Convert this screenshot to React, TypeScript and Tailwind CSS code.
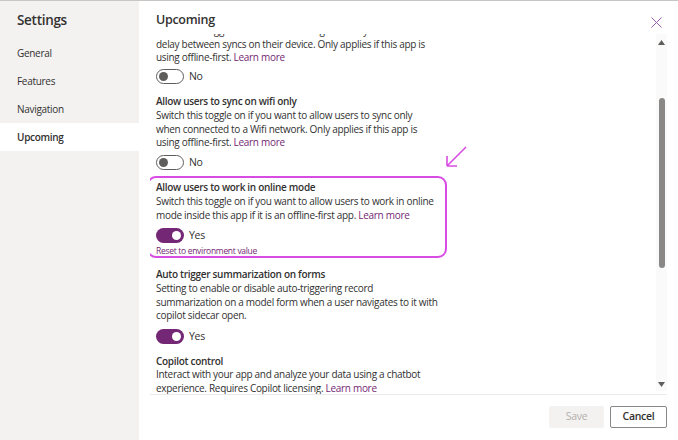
const NAV = ['General', 'Features', 'Navigation', 'Upcoming']

function Toggle({ on }: { on: boolean }) {
  return (
    <div className="flex h-[15px] items-center gap-[5px]">
      <span
        className={`flex h-[15px] w-[28px] items-center rounded-full ${
          on ? 'justify-end bg-[#742774] px-[3px]' : 'justify-start border border-[#605e5c] bg-white px-[2px]'
        }`}
      >
        <span className={`h-[9px] w-[9px] rounded-full ${on ? 'bg-white' : 'bg-[#605e5c]'}`} />
      </span>
      <span className="text-[10.5px] leading-[15px]">{on ? 'Yes' : 'No'}</span>
    </div>
  )
}

function Lines({ lines, link }: { lines: string[]; link?: boolean }) {
  return (
    <div className="leading-[13.5px]">
      {lines.map((l, i) => (
        <div key={i} className="whitespace-nowrap">
          {l}
          {link && i === lines.length - 1 && <span className="text-[#742774]"> Learn more</span>}
        </div>
      ))}
    </div>
  )
}

function Title({ children }: { children: React.ReactNode }) {
  return <div className="whitespace-nowrap font-semibold leading-[14px]">{children}</div>
}

export default function App() {
  return (
    <div className="flex h-[440px] w-[678px] overflow-hidden border-t border-[#c8c6c4] bg-white font-['Open_Sans',sans-serif] tracking-[-0.3px] text-[#323130]">
      <aside className="w-[139px] shrink-0 bg-[#f3f2f1]">
        <div className="mb-[9px] pl-[17px] pt-[9px] text-[13.5px] font-semibold leading-[20px]">Settings</div>
        <nav>
          {NAV.map((item) => (
            <div
              key={item}
              className={`flex h-[28px] items-center pl-[17px] text-[10px] ${
                item === 'Upcoming' ? 'bg-white font-semibold' : ''
              }`}
            >
              {item}
            </div>
          ))}
        </nav>
      </aside>

      <main className="flex min-w-0 flex-1 flex-col">
        <header className="flex h-[33px] shrink-0 items-start justify-between pl-[17px] pr-[16px]">
          <div className="pt-[10px] text-[12.5px] font-semibold leading-[18px]">Upcoming</div>
          <svg width="11" height="11" viewBox="0 0 11 11" className="mt-[16px]">
            <path d="M0.5 0.5 L10.5 10.5 M10.5 0.5 L0.5 10.5" stroke="#9b5cb4" strokeWidth="1" />
          </svg>
        </header>

        <section className="relative ml-[11px] h-[361px] w-[517px] shrink-0 overflow-hidden border-b border-[#edebe9] text-[10px]">
          <div className="-mt-[10px] pl-[6px]">
            <Lines
              lines={[
                'Switch this toggle on to let users configure the sync',
                'delay between syncs on their device. Only applies if this app is',
                'using offline-first.',
              ]}
              link
            />
            <div className="mt-[4.5px]">
              <Toggle on={false} />
            </div>

            <div className="mt-[10px]">
              <Title>Allow users to sync on wifi only</Title>
              <div className="mt-[1px]">
                <Lines
                  lines={[
                    'Switch this toggle on if you want to allow users to sync only',
                    'when connected to a Wifi network. Only applies if this app is',
                    'using offline-first.',
                  ]}
                  link
                />
              </div>
              <div className="mt-[5px]">
                <Toggle on={false} />
              </div>
            </div>

            <div className="relative -ml-[9px] mt-[6.5px] w-[300px] rounded-[9px] border-2 border-[#d94ce3] pb-[0.5px] pl-[7px] pt-[2px]">
              <Title>Allow users to work in online mode</Title>
              <div className="mt-[1px]">
                <Lines
                  lines={[
                    'Switch this toggle on if you want to allow users to work in online',
                    'mode inside this app if it is an offline-first app.',
                  ]}
                  link
                />
              </div>
              <div className="mt-[5.5px]">
                <Toggle on />
              </div>
              <div className="mt-[2px] text-[8.5px] leading-[11px] text-[#742774]">Reset to environment value</div>
              <svg width="24" height="24" viewBox="0 0 24 24" className="absolute -right-[24px] -top-[33px]">
                <path d="M21 2 L2 21 M2 21 L12 21 M2 21 L2 11" stroke="#d94ce3" strokeWidth="1.6" fill="none" />
              </svg>
            </div>

            <div className="mt-[9px]">
              <Title>Auto trigger summarization on forms</Title>
              <div className="mt-[1px]">
                <Lines
                  lines={[
                    'Setting to enable or disable auto-triggering record',
                    'summarization on a model form when a user navigates to it with',
                    'copilot sidecar open.',
                  ]}
                />
              </div>
              <div className="mt-[6px]">
                <Toggle on />
              </div>
            </div>

            <div className="mt-[10.5px]">
              <Title>Copilot control</Title>
              <Lines
                lines={[
                  'Interact with your app and analyze your data using a chatbot',
                  'experience. Requires Copilot licensing.',
                ]}
                link
              />
            </div>
          </div>

          {/* scrollbar */}
          <div className="absolute bottom-[3px] right-0 top-0 flex w-[11px] flex-col items-center bg-[#fafafa]">
            <svg width="7" height="5" viewBox="0 0 7 5" className="mt-[6px]">
              <path d="M3.5 0 L7 5 L0 5 Z" fill="#605e5c" />
            </svg>
            <div className="mt-[53px] h-[170px] w-[6px] rounded-full bg-[#8a8886]" />
            <div className="flex-1" />
            <svg width="7" height="5" viewBox="0 0 7 5" className="mb-[4px]">
              <path d="M0 0 L7 0 L3.5 5 Z" fill="#605e5c" />
            </svg>
          </div>
        </section>

        <footer className="flex justify-end gap-[6px] pr-[11px] pt-[11px] text-[10.5px]">
          <button className="h-[22px] w-[55px] rounded-[2px] bg-[#f3f2f1] text-[#b3b0ad]">Save</button>
          <button className="h-[22px] w-[57px] rounded-[2px] border border-[#8a8886] bg-white font-semibold">Cancel</button>
        </footer>
      </main>
    </div>
  )
}
